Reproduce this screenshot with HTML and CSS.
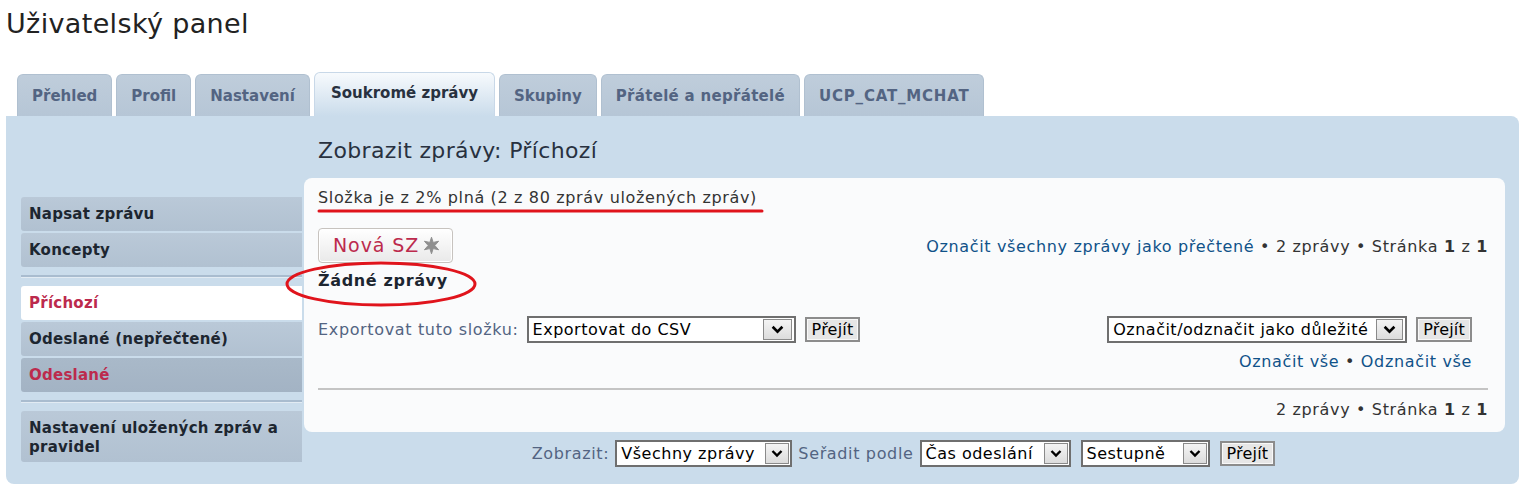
FILE: index.html
```html
<!DOCTYPE html>
<html lang="cs">
<head>
<meta charset="utf-8">
<title>Uživatelský panel</title>
<link rel="stylesheet" href="styles.css">
</head>
<body>
<h2 class="page-title">Uživatelský panel</h2>

<div class="tabs">
  <a class="tab">Přehled</a>
  <a class="tab">Profil</a>
  <a class="tab">Nastavení</a>
  <a class="tab active">Soukromé zprávy</a>
  <a class="tab">Skupiny</a>
  <a class="tab wide">Přátelé a nepřátelé</a>
  <a class="tab caps">UCP_CAT_MCHAT</a>
</div>

<div class="panel">
  <div class="nav">
    <div class="nav-group">
      <a class="nav-item">Napsat zprávu</a>
      <a class="nav-item">Koncepty</a>
    </div>
    <div class="nav-group">
      <a class="nav-item current">Příchozí</a>
      <a class="nav-item">Odeslané (nepřečtené)</a>
      <a class="nav-item hover">Odeslané</a>
    </div>
    <div class="nav-group last">
      <a class="nav-item">Nastavení uložených zpráv a pravidel</a>
    </div>
  </div>

  <div class="main">
    <h2 class="main-title">Zobrazit zprávy: Příchozí</h2>
    <div class="inner">
      <p class="folder-status">Složka je z 2% plná (2 z 80 zpráv uložených zpráv)</p>
      <div class="action-row">
        <a class="btn-new">Nová SZ <svg class="star" viewBox="0 0 16 16" width="19" height="19"><path d="M8 1 L9.4 5.4 L14 4.4 L10.8 8 L14 11.6 L9.4 10.6 L8 15 L6.6 10.6 L2 11.6 L5.2 8 L2 4.4 L6.6 5.4 Z" fill="#8f8f8f" stroke="#8f8f8f" stroke-width="0.8" stroke-linejoin="round"/></svg></a>
        <div class="pagination"><a class="link">Označit všechny zprávy jako přečtené</a> • 2 zprávy • Stránka <b>1</b> z <b>1</b></div>
      </div>
      <p class="empty">Žádné zprávy</p>

      <div class="export-row">
        <div class="export-left">
          <span class="label">Exportovat tuto složku:</span>
          <span class="select w-export"><span class="sel-text">Exportovat do CSV</span><span class="sel-arrow"><svg viewBox="0 0 12 8" width="13" height="9"><path d="M1.5 1.5 L6 6 L10.5 1.5" fill="none" stroke="#000" stroke-width="2.4"/></svg></span></span>
          <span class="button">Přejít</span>
        </div>
        <div class="export-right">
          <div class="mark-row">
            <span class="select w-mark"><span class="sel-text">Označit/odznačit jako důležité</span><span class="sel-arrow narrow"><svg viewBox="0 0 12 8" width="13" height="9"><path d="M1.5 1.5 L6 6 L10.5 1.5" fill="none" stroke="#000" stroke-width="2.4"/></svg></span></span>
            <span class="button">Přejít</span>
          </div>
          <div class="mark-links"><a class="link">Označit vše</a> • <a class="link">Odznačit vše</a></div>
        </div>
      </div>

      <hr class="divider">
      <div class="pagination bottom">2 zprávy • Stránka <b>1</b> z <b>1</b></div>
    </div>

    <div class="sort-bar">
      <span class="label">Zobrazit:</span>
      <span class="select small w-show"><span class="sel-text">Všechny zprávy</span><span class="sel-arrow"><svg viewBox="0 0 12 8" width="12" height="9"><path d="M1.5 1.5 L6 6 L10.5 1.5" fill="none" stroke="#000" stroke-width="2.4"/></svg></span></span>
      <span class="label">Seřadit podle</span>
      <span class="select small w-time"><span class="sel-text">Čas odeslání</span><span class="sel-arrow"><svg viewBox="0 0 12 8" width="12" height="9"><path d="M1.5 1.5 L6 6 L10.5 1.5" fill="none" stroke="#000" stroke-width="2.4"/></svg></span></span>
      <span class="select small w-dir"><span class="sel-text">Sestupně</span><span class="sel-arrow"><svg viewBox="0 0 12 8" width="12" height="9"><path d="M1.5 1.5 L6 6 L10.5 1.5" fill="none" stroke="#000" stroke-width="2.4"/></svg></span></span>
      <span class="button small">Přejít</span>
    </div>
  </div>
</div>

<svg class="annotations" width="1522" height="488" viewBox="0 0 1522 488">
  <path d="M319 211 L762 211" stroke="#e0141c" stroke-width="3" stroke-linecap="round" fill="none"/>
  <ellipse cx="381" cy="284" rx="94" ry="21" stroke="#e0141c" stroke-width="3" fill="none"/>
</svg>
</body>
</html>
```

FILE: styles.css
```css
* { box-sizing: border-box; }

html, body {
  margin: 0;
  padding: 0;
  background: #ffffff;
}

body {
  position: relative;
  width: 1522px;
  height: 488px;
  overflow: hidden;
  font-family: "DejaVu Sans", Verdana, sans-serif;
  font-size: 16px;
  letter-spacing: 0.65px;
  color: #333333;
}

.page-title {
  margin: 0;
  padding: 8px 0 0 6px;
  height: 74px;
  font-weight: normal;
  font-size: 27px;
  letter-spacing: 0.35px;
  color: #222222;
}

.tabs {
  display: flex;
  align-items: flex-end;
  gap: 4px;
  padding-left: 17px;
  height: 42px;
}

.tab {
  display: block;
  height: 42px;
  padding: 0 14px;
  line-height: 42px;
  font-weight: bold;
  font-size: 15px;
  letter-spacing: 0;
  color: #536482;
  background: linear-gradient(#bfcddb, #b6c6d6);
  border: 1px solid #b0c0d0;
  border-bottom: none;
  border-radius: 6px 6px 0 0;
}

.tab.wide {
  letter-spacing: 0.3px;
}

.tab.caps {
  letter-spacing: 0.8px;
}

.tab.active {
  height: 44px;
  line-height: 40px;
  padding: 0 16px;
  color: #28313f;
  background: linear-gradient(#f7fafd, #cadceb);
  border-color: #c8d8e8;
}

.panel {
  display: flex;
  margin: 0 3px 0 6px;
  height: 368px;
  padding: 0 14px 0 15px;
  background: #cadceb;
  border-radius: 8px;
  border-top-left-radius: 0;
}

.nav {
  width: 281px;
  flex: none;
  padding-top: 81px;
}

.nav-group {
  display: flex;
  flex-direction: column;
  gap: 2px;
  padding-bottom: 8px;
  margin-bottom: 9px;
  border-bottom: 2px solid #a9bccf;
  box-shadow: 0 1px 0 #e2ebf3;
}

.nav-group.last {
  border-bottom: none;
  box-shadow: none;
}

.nav-item {
  display: block;
  padding: 8px 8px 6px 8px;
  min-height: 34px;
  font-weight: bold;
  font-size: 15px;
  line-height: 19px;
  letter-spacing: 0.25px;
  color: #1d2630;
  background: linear-gradient(#bac9d8, #b1c1d1);
  border-radius: 3px 0 0 3px;
}

.nav-item.current {
  background: #ffffff;
  color: #bc2a4d;
}

.nav-item.hover {
  background: linear-gradient(#a9b9c9, #a3b3c4);
  color: #bc2a4d;
}

.nav-group.last .nav-item {
  padding: 8px 8px 5px 8px;
}

.main {
  flex: 1;
  margin-left: 2px;
  display: flex;
  flex-direction: column;
}

.main-title {
  margin: 0;
  padding: 22px 0 0 14px;
  height: 62px;
  font-weight: normal;
  font-size: 22px;
  letter-spacing: 0.35px;
  color: #28313f;
}

.inner {
  background: #fafbfc;
  border-radius: 8px;
  padding: 9px 17px 0 14px;
  height: 254px;
}

.folder-status {
  margin: 0;
  height: 40px;
  line-height: 22px;
  color: #333333;
}

.action-row {
  display: flex;
  justify-content: space-between;
  align-items: center;
  height: 36px;
}

.btn-new {
  display: inline-flex;
  align-items: center;
  gap: 3px;
  height: 35px;
  padding: 0 11px 0 14px;
  font-size: 19px;
  letter-spacing: 0.9px;
  color: #bc2a4d;
  background: linear-gradient(#ffffff, #e9e9e9);
  border: 1px solid #c7c3bf;
  border-radius: 4px;
  box-shadow: 0 0 0 1px #ffffff inset;
}

.star { display: block; }

.pagination {
  padding-top: 2px;
  color: #333333;
}

.link { color: #105289; }

.empty {
  margin: 0;
  padding-top: 8px;
  height: 53px;
  font-weight: bold;
  color: #1d2630;
}

.export-row {
  display: flex;
  justify-content: space-between;
  align-items: flex-start;
}

.export-left,
.mark-row {
  display: flex;
  align-items: center;
  gap: 8px;
}

.export-right {
  display: flex;
  flex-direction: column;
  align-items: flex-end;
  padding-right: 16px;
}

.mark-links {
  margin-top: 9px;
  color: #333333;
}

.label {
  color: #536482;
}

.select {
  display: inline-flex;
  align-items: center;
  justify-content: space-between;
  height: 27px;
  padding: 0 2px 0 4px;
  border: 2px solid #6f6f6f;
  background: #ffffff;
  color: #000000;
  letter-spacing: 0.5px;
}

.sel-text { white-space: nowrap; }

.sel-arrow {
  display: inline-flex;
  align-items: center;
  justify-content: center;
  width: 29px;
  height: 21px;
  border: 1px solid #8a8a8a;
  background: linear-gradient(#f4f4f4, #dcdcdc);
}

.sel-arrow.narrow { width: 27px; }

.w-export { width: 269px; }
.w-mark { width: 300px; }

.button {
  display: inline-flex;
  align-items: center;
  height: 25px;
  padding: 0 5px;
  margin-left: 1px;
  letter-spacing: 0.2px;
  color: #000000;
  background: #e6e6e6;
  border: 2px solid #8c8c8c;
  box-shadow: inset 0 0 0 1px #f8f8f8;
}

.divider {
  margin: 17px 0 0 0;
  border: none;
  height: 2px;
  background: #c4c4c4;
}

.pagination.bottom {
  text-align: right;
  padding-top: 10px;
}

.sort-bar {
  display: flex;
  justify-content: center;
  align-items: center;
  gap: 6px;
  padding-top: 8px;
  margin-left: -2px;
}

.select.small {
  padding: 0 1px 0 4px;
}

.select.small .sel-arrow {
  width: 24px;
}

.w-show { width: 177px; }
.w-time { width: 151px; margin-right: 4px; }
.w-dir { width: 129px; margin-right: 3px; }

.annotations {
  position: absolute;
  left: 0;
  top: 0;
  pointer-events: none;
}
```
